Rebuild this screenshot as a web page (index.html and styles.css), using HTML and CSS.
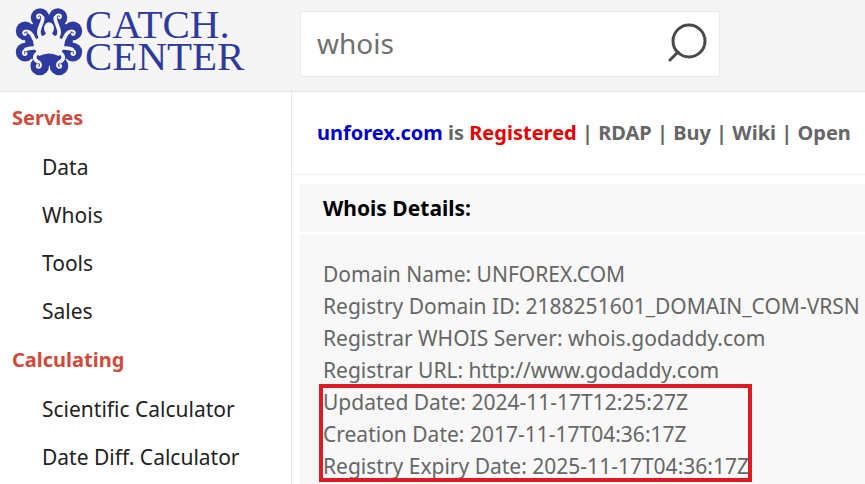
FILE: index.html
```html
<!DOCTYPE html>
<html lang="en">
<head>
    <meta charset="UTF-8">
    <meta name="viewport" content="width=device-width, initial-scale=1.0">
    <title>Whois - Catch.Center</title>
    <link rel="stylesheet" href="styles.css">
</head>
<body>
    <header class="header">
        <a class="logo" href="#">
            <svg class="logo-mark" viewBox="20 18 204 208" aria-hidden="true">
                <g fill="#2f3a9e">
                    <circle cx="122" cy="122" r="72"/>
                    <circle cx="95" cy="50" r="28"/>
                    <circle cx="149" cy="50" r="28"/>
                    <circle cx="194" cy="90" r="28"/>
                    <circle cx="194" cy="154" r="28"/>
                    <circle cx="152" cy="196" r="28"/>
                    <circle cx="94" cy="196" r="28"/>
                    <circle cx="50" cy="154" r="28"/>
                    <circle cx="50" cy="90" r="28"/>
                </g>
                <g fill="#f5f5f5">
                    <ellipse cx="122" cy="82" rx="15" ry="18"/>
                    <path d="M113 90Q115 104 96 106L74 122L78 144L92 166Q122 150 152 166L166 144L170 122L148 106Q129 104 131 90Z"/>
                </g>
                <g fill="none" stroke="#f5f5f5" stroke-linecap="round">
                    <path stroke-width="11" d="M102 114C76 94 106 68 103 50M142 114C168 94 138 68 141 50M88 124C72 122 78 102 62 94M156 124C172 122 166 102 182 94M90 138C72 146 68 138 52 146M154 138C172 146 176 138 192 146M96 154C76 160 74 174 88 183M148 154C168 160 170 174 156 183"/>
                    <path stroke-width="6" d="M103 52C102 37 86 38 86 47C86 53 92 53 93 49M141 52C142 37 158 38 158 47C158 53 152 53 151 49M64 93C52 84 42 92 45 99C48 105 54 101 52 98M180 93C192 84 202 92 199 99C196 105 190 101 192 98M54 145C41 148 40 162 50 163C56 162 55 157 52 156M190 145C203 148 204 162 194 163C188 162 189 157 192 156M86 180C101 184 101 201 90 201C83 200 84 193 89 193M158 180C143 184 143 201 154 201C161 200 160 193 155 193"/>
                </g>
            </svg>
            <span class="logo-text">CATCH.<br>CENTER</span>
        </a>
        <form class="search" role="search">
            <input class="search-input" type="text" name="q" value="whois" aria-label="Search">
            <button class="search-btn" type="submit" aria-label="Search">
                <svg viewBox="0 0 40 40" fill="none" stroke="#4a4a4a" stroke-width="3" stroke-linecap="round">
                    <circle cx="21" cy="18" r="16"/>
                    <path d="M10 29L2 37"/>
                </svg>
            </button>
        </form>
    </header>

    <div class="layout">
        <nav class="sidebar">
            <h2>Servies</h2>
            <ul>
                <li><a href="#">Data</a></li>
                <li><a href="#">Whois</a></li>
                <li><a href="#">Tools</a></li>
                <li><a href="#">Sales</a></li>
            </ul>
            <h2>Calculating</h2>
            <ul>
                <li><a href="#">Scientific Calculator</a></li>
                <li><a href="#">Date Diff. Calculator</a></li>
            </ul>
        </nav>

        <main class="content">
            <div class="status">
                <a class="domain" href="#">unforex.com</a> is <span class="registered">Registered</span> | <a href="#">RDAP</a> | <a href="#">Buy</a> | <a href="#">Wiki</a> | <a href="#">Open</a>
            </div>
            <section class="panel">
                <h1>Whois Details:</h1>
                <div class="details">
                    <p>Domain Name: UNFOREX.COM</p>
                    <p>Registry Domain ID: 2188251601_DOMAIN_COM-VRSN</p>
                    <p>Registrar WHOIS Server: whois.godaddy.com</p>
                    <p>Registrar URL: http://www.godaddy.com</p>
                    <div class="dates">
                        <p>Updated Date: 2024-11-17T12:25:27Z</p>
                        <p>Creation Date: 2017-11-17T04:36:17Z</p>
                        <p>Registry Expiry Date: 2025-11-17T04:36:17Z</p>
                    </div>
                </div>
            </section>
        </main>
    </div>
</body>
</html>
```

FILE: styles.css
```css
* {
    margin: 0;
    padding: 0;
    box-sizing: border-box;
}

body {
    font-family: "Noto Sans", "Open Sans", sans-serif;
    font-size: 21px;
    background: #ffffff;
    color: #666666;
    min-height: 100vh;
    display: flex;
    flex-direction: column;
    overflow: hidden;
}

a {
    color: inherit;
    text-decoration: none;
}

.header {
    display: grid;
    grid-template-columns: 285px minmax(0, 420px);
    column-gap: 15px;
    align-items: center;
    padding: 3px 0 6px;
    height: 92px;
    background: #f5f5f5;
    border-bottom: 1px solid #e6e6e6;
}

.logo {
    display: flex;
    align-items: center;
    gap: 2px;
    padding: 0 0 6px 15px;
    color: #2f3a9e;
}

.logo-mark {
    width: 68px;
    height: 69px;
}

.logo-text {
    font-family: "Liberation Serif", serif;
    font-size: 41px;
    line-height: 32px;
    padding-bottom: 2px;
}

.search {
    display: flex;
    align-items: center;
    height: 66px;
    padding: 0 11px 2px 16px;
    background: #ffffff;
    border: 1px solid #e8e8e8;
    border-radius: 2px;
}

.search-input {
    flex: 1;
    min-width: 0;
    border: none;
    outline: none;
    background: transparent;
    color: #707070;
    font-family: inherit;
    font-size: 28px;
}

.search-btn {
    width: 40px;
    height: 40px;
    border: none;
    background: none;
    cursor: pointer;
}

.search-btn svg {
    display: block;
    width: 40px;
    height: 40px;
}

.layout {
    flex: 1;
    display: grid;
    grid-template-columns: 292px minmax(0, 1fr);
}

.sidebar {
    padding: 1px 12px 0;
    border-right: 1px solid #e8e8e8;
    color: #222222;
}

.sidebar h2 {
    color: #d04a3c;
    font-size: 20px;
    line-height: 50px;
}

.sidebar ul {
    list-style: none;
    padding-left: 30px;
}

.sidebar li {
    line-height: 48px;
}

.content {
    display: flex;
    flex-direction: column;
}

.status {
    padding-left: 25px;
    font-size: 20px;
    line-height: 82px;
    font-weight: bold;
    white-space: nowrap;
    border-bottom: 1px solid #eeeeee;
}

.domain {
    color: #0000cc;
}

.registered {
    color: #e60000;
}

.panel {
    flex: 1;
    display: flex;
    flex-direction: column;
    gap: 2px;
    padding: 9px 0 0 8px;
}

.panel h1 {
    padding-left: 23px;
    background: #f8f8f8;
    color: #000000;
    font-size: 21px;
    line-height: 48px;
}

.details {
    flex: 1;
    padding: 24px 0 0 23px;
    background: #f8f8f8;
    line-height: 32px;
    white-space: nowrap;
}

/* red frame drawn over the date lines */
.dates {
    position: relative;
    width: fit-content;
}

.dates::after {
    content: "";
    position: absolute;
    inset: -2px -3px 0 -4px;
    border: 4px solid #dc1c24;
}
```
